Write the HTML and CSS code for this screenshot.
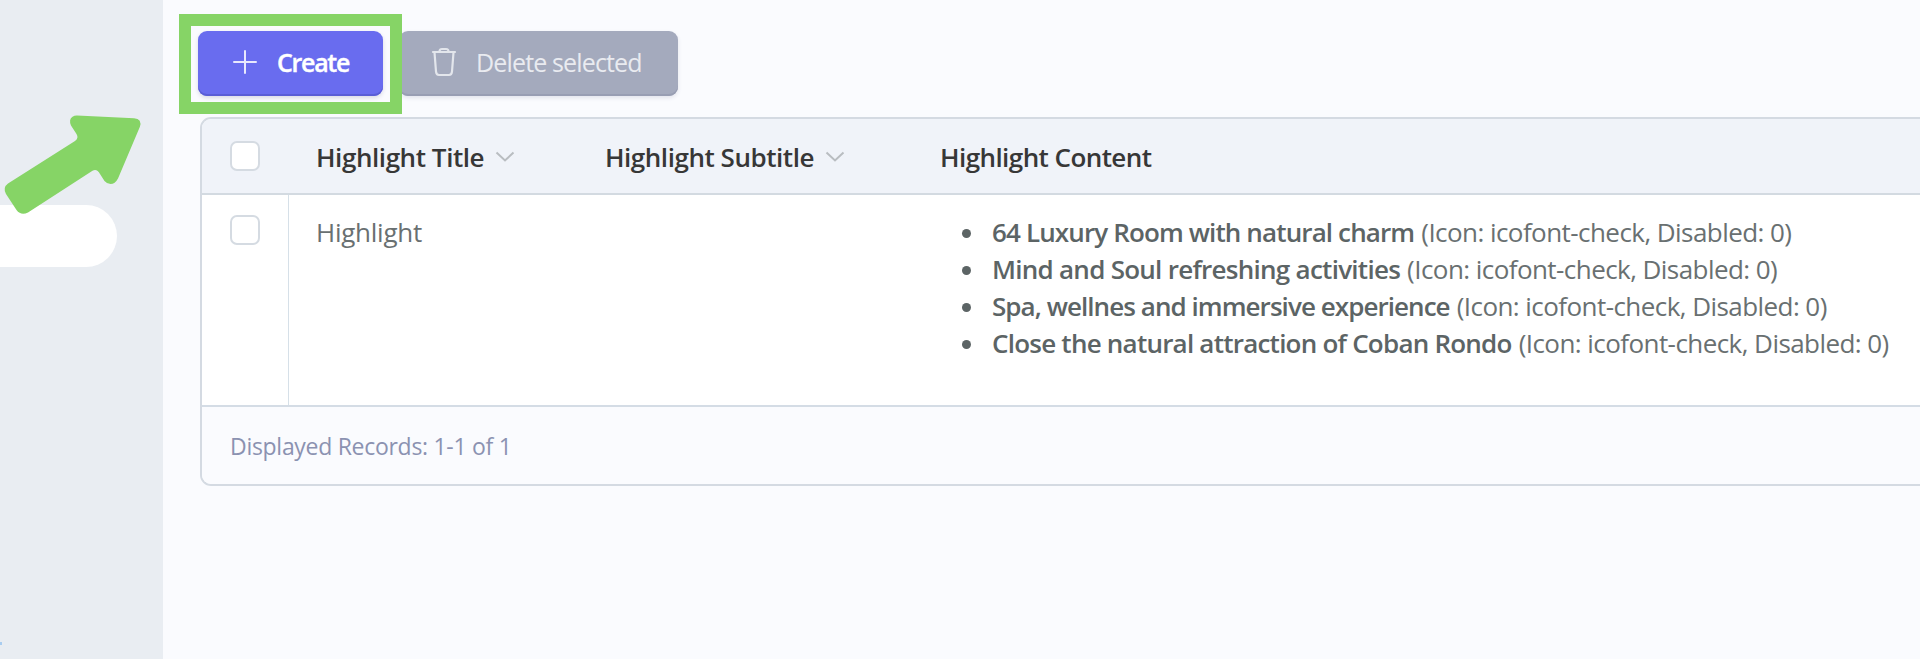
FILE: index.html
```html
<!DOCTYPE html>
<html lang="en">
<head>
<meta charset="utf-8">
<title>Highlights</title>
<link rel="stylesheet" href="styles.css">
</head>
<body>
<div class="page">
  <aside class="sidebar">
    <div class="nav-pill"></div>
    <span class="nav-edge"></span>
  </aside>
  <main class="main">
    <div class="toolbar">
      <button class="btn btn-create">
        <svg class="icon-plus" width="24" height="24" viewBox="0 0 24 24"><path d="M12 1v22M1 12h22" stroke="#e8e8fd" stroke-width="2" stroke-linecap="round"/></svg>
        <span class="create-label">Create</span>
      </button>
      <button class="btn btn-delete" disabled>
        <svg class="icon-trash" width="26" height="30" viewBox="0 0 26 30" fill="none" stroke="#e3e6ec" stroke-width="2.200" stroke-linecap="round" stroke-linejoin="round"><path d="M2 5h22M8.500 4.500C8.500 2.500 9.500 2 11 2h4c1.500 0 2.500.5 2.500 2.500M3.500 5.500l1.500 19c.2 2.500 1.200 3.500 3 3.500h10c1.800 0 2.800-1 3-3.500l1.500-19"/></svg>
        <span class="delete-label">Delete selected</span>
      </button>
    </div>
    <section class="card">
      <div class="row head">
        <div class="cell check"><span class="box"></span></div>
        <div class="cell title"><span class="t1">Highlight Title</span><svg class="chev" width="20" height="12" viewBox="0 0 20 12"><path d="M1.500 1.500L10 9.500l8.500-8" fill="none" stroke="#b9bdc1" stroke-width="2"/></svg></div>
        <div class="cell subtitle"><span class="t2">Highlight Subtitle</span><svg class="chev" width="20" height="12" viewBox="0 0 20 12"><path d="M1.500 1.500L10 9.500l8.500-8" fill="none" stroke="#b9bdc1" stroke-width="2"/></svg></div>
        <div class="cell"><span class="t3">Highlight Content</span></div>
      </div>
      <div class="row data">
        <div class="cell check"><span class="box"></span></div>
        <div class="cell title"><span class="value">Highlight</span></div>
        <div class="cell subtitle"></div>
        <ul class="list">
          <li><b class="b1">64 Luxury Room with natural charm</b><span>(Icon: icofont-check, Disabled: 0)</span></li>
          <li><b class="b2">Mind and Soul refreshing activities</b><span>(Icon: icofont-check, Disabled: 0)</span></li>
          <li><b class="b3">Spa, wellnes and immersive experience</b><span>(Icon: icofont-check, Disabled: 0)</span></li>
          <li><b class="b4">Close the natural attraction of Coban Rondo</b><span>(Icon: icofont-check, Disabled: 0)</span></li>
        </ul>
      </div>
      <div class="foot"><span class="records">Displayed Records: 1-1 of 1</span></div>
    </section>
  </main>
  <div class="focus-frame"></div>
  <svg class="arrow" width="144" height="222" viewBox="0 0 144 222"><path fill="#86d466" d="M77 115.500L134 118.200Q142.500 119 139.800 127L118 178.500Q115 184 110.500 184Q107 184 104.500 181L100 174Q97 168.500 92.500 170.800L28 212.500Q21 216 16.500 210L6 194Q2.500 187.500 8 183.500L75 141Q79 138 76.500 134L71 125.500Q68.500 119.500 72.500 116.800Q74.500 115.400 77 115.500Z"/></svg>
</div>
</body>
</html>
```
FILE: styles.css
```css
* { box-sizing: border-box; }
body { margin: 0; overflow: hidden; font-family: "Open Sans", "Noto Sans", sans-serif; }
.page { position: relative; display: flex; height: 659px; overflow: hidden; background: #fafbfe; }
.sidebar { flex: 0 0 163px; padding-top: 205px; background: #e9edf2; }
.nav-pill { width: 117px; height: 62px; border-radius: 0 31px 31px 0; background: #fff; }
.nav-edge { display: block; width: 2px; height: 3px; margin-top: 375px; background: #a9cdf0; }
.main { flex: 1; min-width: 0; padding: 31px 0 0 35px; }
.toolbar { display: flex; gap: 16px; height: 86px; }
.btn { display: flex; align-items: center; height: 65px; padding: 0 0 3px; border: 0; border-radius: 9px; font: 400 25px/36px "Open Sans", sans-serif; white-space: nowrap; }
.btn-create { width: 185px; padding-left: 35px; color: #fff; background: #696cef; box-shadow: inset 0 -2px #5a5dd6, 0 2px 4px #d9dae5; font-weight: 600; }
.btn-delete { width: 279px; padding-left: 32px; color: #e9ebf0; background: #a4aabd; box-shadow: inset 0 -2px #989eb3, 0 2px 4px #e2e4ec; }
.icon-plus { margin-right: 20px; margin-top: -1px; }
.icon-trash { margin-right: 19px; margin-top: -1px; }
.create-label { letter-spacing: -1.300px; -webkit-text-stroke: .4px #fff; }
.delete-label { letter-spacing: -.850px; }
.card { width: 1740px; margin-left: 2px; border: 2px solid #d4dae2; border-radius: 11px; overflow: hidden; }
.row { display: flex; }
.head { height: 76px; background: #f0f3f9; border-bottom: 2px solid #d3dae1; color: #373737; font-size: 26px; font-weight: 600; line-height: 36px; padding-top: 20px; }
.data { height: 210px; background: #fff; color: #697071; font-size: 26px; line-height: 37px; }
.cell { white-space: nowrap; }
.check { flex: 0 0 87px; padding-left: 28px; }
.head .check { padding-top: 2px; }
.data .check { padding-top: 20px; border-right: 1px solid #d6e0e8; }
.box { display: block; width: 30px; height: 30px; border: 2px solid #d5dbe2; border-radius: 7px; background: #fff; }
.title { flex: 0 0 289px; padding-left: 27px; }
.subtitle { flex: 0 0 335px; padding-left: 27px; }
.data .title { padding-top: 19px; }
.head .cell:last-child { padding-left: 27px; }
.chev { margin-left: 11px; vertical-align: 4px; }
.list { margin: 0; padding: 19px 0 0 49px; white-space: nowrap; list-style: none; }
.list li { display: flex; align-items: center; height: 37px; }
.list li::before { content: ""; width: 9px; height: 9px; margin: 2px 21px 0 0; border-radius: 50%; background: #5c6465; }
.list b { font-weight: 600; color: #5c6465; margin-right: 7px; }
.list span { letter-spacing: -.560px; }
.t1 { letter-spacing: -.430px; }
.t2 { letter-spacing: -.460px; }
.t3 { letter-spacing: -.570px; }
.value { letter-spacing: -.250px; }
.b1 { letter-spacing: -.870px; }
.b2 { letter-spacing: -.730px; }
.b3 { letter-spacing: -.940px; }
.b4 { letter-spacing: -.770px; }
.foot { height: 79px; padding: 21px 0 0 28px; border-top: 2px solid #d4dce5; background: #fafbfe; color: #8b92b1; font-size: 23px; line-height: 36px; }
.records { letter-spacing: -.290px; }
.focus-frame { position: absolute; left: 179px; top: 14px; width: 223px; height: 100px; border: 12px solid #86d466; }
.arrow { position: absolute; left: 0; top: 0; }
```
